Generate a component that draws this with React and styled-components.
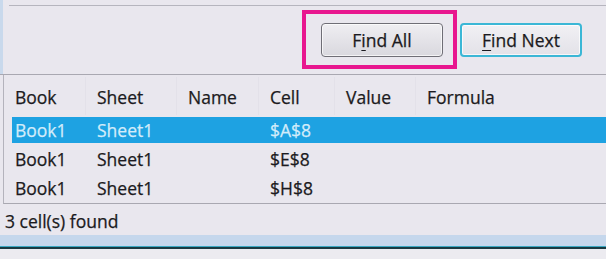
import React from "react";
import styled, { createGlobalStyle } from "styled-components";

const Global = createGlobalStyle`
  html, body { margin: 0; padding: 0; background: #e9e7ee; }
  body { font-family: "Open Sans", "Noto Sans", "DejaVu Sans", sans-serif; }
`;

const Frame = styled.div`
  width: 606px;
  height: 259px;
  overflow: hidden;
  background: #e9e7ee;
  display: flex;
  flex-direction: column;
  color: #1b1a20;
  font-size: 17.5px;
  -webkit-text-stroke: 0.25px currentColor;
`;

const TopPanel = styled.div`
  height: 74px;
  box-sizing: border-box;
  border-left: 3px solid #c9d9ec;
  padding: 5px 0 0 6px;
  display: flex;
  flex-direction: column;
`;

const ButtonBar = styled.div`
  flex: 1;
  border-top: 1px solid #b6b5be;
  display: flex;
  justify-content: flex-end;
  align-items: flex-start;
  padding: 4px 24px 0 0;
`;

const Highlight = styled.div`
  width: 155px;
  height: 59px;
  box-sizing: border-box;
  border: 4px solid #e8178f;
  padding: 9px 10px 8px 15px;
`;

const Button = styled.button`
  width: 122px;
  height: 34px;
  box-sizing: border-box;
  margin: ${(p) => (p.$primary ? "13px 0 0 3px" : "0")};
  border: ${(p) => (p.$primary ? "2px solid #3bb7d6" : "1px solid #6f6e76")};
  border-radius: 4px;
  background: ${(p) =>
    p.$primary
      ? "linear-gradient(#f1f0f4, #e3e2e8)"
      : "linear-gradient(#efeef2, #d9d8de)"};
  box-shadow: inset 0 0 0 1px rgba(255, 255, 255, 0.7);
  font-family: inherit;
  font-size: 17.5px;
  color: #1b1a20;
  -webkit-text-stroke: 0.25px currentColor;
  padding: 0;
  display: flex;
  align-items: center;
  justify-content: center;
`;

const Key = styled.span`
  text-decoration: underline;
  text-underline-offset: 3px;
  text-decoration-thickness: 1px;
`;

const ListArea = styled.div`
  border-top: 1px solid #a9a8b1;
`;

const ListBox = styled.div`
  margin-left: 3px;
  border-left: 1px solid #b4b3bc;
  border-bottom: 1px solid #a9a8b1;
  height: 128px;
`;

const Grid = styled.div`
  display: grid;
  grid-template-columns: 82px 91px 82px 76px 81px 1fr;
  margin-left: 8px;
`;

const HeaderRow = styled(Grid)`
  height: 42px;
`;

const HeaderCell = styled.div`
  position: relative;
  padding: 1px 0 0 3px;
  display: flex;
  align-items: center;
  white-space: nowrap;
  &::before {
    content: "";
    display: ${(p) => (p.$first ? "none" : "block")};
    position: absolute;
    left: -9px;
    top: 2px;
    bottom: 2px;
    width: 1px;
    background: #e3e1e9;
  }
`;

const Row = styled(Grid)`
  height: 26px;
  margin-bottom: 3px;
  align-items: center;
  background: ${(p) => (p.$selected ? "#1ea2e2" : "transparent")};
  color: ${(p) => (p.$selected ? "#d3ecfa" : "#1b1a20")};
`;

const Cell = styled.div`
  padding-left: 3px;
  white-space: nowrap;
`;

const Status = styled.div`
  height: 31px;
  box-sizing: border-box;
  padding: 2px 0 0 5px;
  display: flex;
  align-items: center;
`;

const BlueStrip = styled.div`
  height: 11px;
  background: #c5d7ec;
`;

const EdgeLine = styled.div`
  height: 3px;
  background: linear-gradient(#3aa8c2 0, #3aa8c2 1px, #183a42 1px, #183a42 3px);
`;

const Below = styled.div`
  flex: 1;
  background: #ecebf0;
`;

const columns = ["Book", "Sheet", "Name", "Cell", "Value", "Formula"];
const rows = [
  { book: "Book1", sheet: "Sheet1", cell: "$A$8", selected: true },
  { book: "Book1", sheet: "Sheet1", cell: "$E$8" },
  { book: "Book1", sheet: "Sheet1", cell: "$H$8" },
];

export default function App() {
  return (
    <>
      <Global />
      <Frame>
        <TopPanel>
          <ButtonBar>
            <Highlight>
              <Button>
                F<Key>i</Key>nd All
              </Button>
            </Highlight>
            <Button $primary>
              <Key>F</Key>ind Next
            </Button>
          </ButtonBar>
        </TopPanel>
        <ListArea>
          <ListBox>
            <HeaderRow>
              {columns.map((c, i) => (
                <HeaderCell key={c} $first={i === 0}>
                  {c}
                </HeaderCell>
              ))}
            </HeaderRow>
            {rows.map((r, i) => (
              <Row key={i} $selected={r.selected}>
                <Cell>{r.book}</Cell>
                <Cell>{r.sheet}</Cell>
                <Cell></Cell>
                <Cell>{r.cell}</Cell>
                <Cell></Cell>
                <Cell></Cell>
              </Row>
            ))}
          </ListBox>
        </ListArea>
        <Status>3 cell(s) found</Status>
        <BlueStrip />
        <EdgeLine />
        <Below />
      </Frame>
    </>
  );
}
